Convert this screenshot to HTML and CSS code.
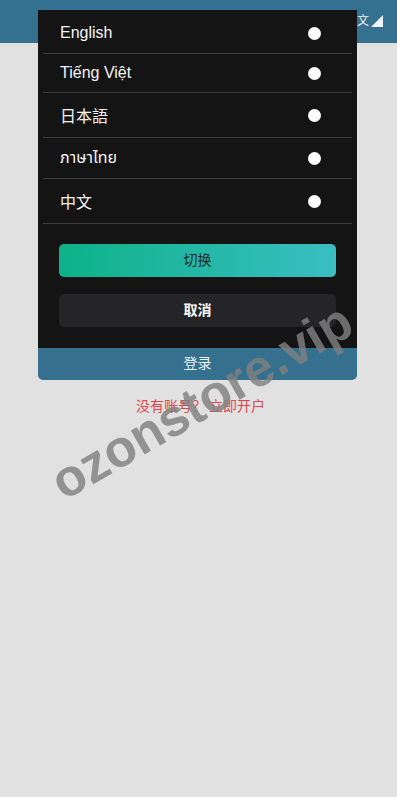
FILE: index.html
```html
<!DOCTYPE html>
<html lang="zh">
<head>
<meta charset="utf-8">
<title>登录</title>
<link rel="stylesheet" href="styles.css">
</head>
<body>
<header class="topbar">
  <div class="lang-switch"><span class="lang-icon">文</span><span class="corner"></span></div>
</header>
<main class="page">
  <div class="form-spacer"></div>
  <button class="login-btn">登录</button>
  <p class="register">没有账号？ 立即开户</p>
</main>

<div class="modal">
  <ul class="lang-list">
    <li class="lang-row r1"><span>English</span><i class="radio"></i></li>
    <li class="lang-row r2"><span>Tiếng Việt</span><i class="radio"></i></li>
    <li class="lang-row r3"><span>日本語</span><i class="radio"></i></li>
    <li class="lang-row r4"><span>ภาษาไทย</span><i class="radio"></i></li>
    <li class="lang-row r5"><span>中文</span><i class="radio"></i></li>
  </ul>
  <div class="actions">
    <button class="btn-switch">切换</button>
    <button class="btn-cancel">取消</button>
  </div>
</div>

<div class="watermark">ozonstore.vip</div>
</body>
</html>
```
FILE: styles.css
```css
* { box-sizing: border-box; }
html, body { margin: 0; padding: 0; }
body {
  background: #e1e1e1;
  font-family: "Liberation Sans", Arial, "Noto Sans CJK SC", sans-serif;
  width: 397px;
  height: 797px;
  overflow: hidden;
  position: relative;
}
.topbar {
  height: 43px;
  background: #34708f;
  display: flex;
  justify-content: flex-end;
  align-items: center;
  padding-right: 14px;
}
.lang-switch {
  display: flex;
  align-items: flex-end;
  gap: 2px;
  margin-top: -4px;
}
.lang-icon {
  color: #e8eef2;
  font-size: 12px;
  font-family: "Noto Sans CJK SC", sans-serif;
  line-height: 14px;
}
.corner {
  width: 0; height: 0;
  border-left: 12px solid transparent;
  border-bottom: 12px solid #eef2f5;
}
.page {
  padding: 0 40px 0 38px;
}
.form-spacer { height: 297px; }
.login-btn {
  display: block;
  width: 319px;
  height: 40px;
  border: 0;
  border-radius: 0 0 5px 5px;
  background: #35708f;
  color: #eef3f6;
  font-family: "Noto Sans CJK SC", sans-serif;
  font-size: 14px;
  padding: 3px 0 0;
}
.register {
  margin: 15px 0 0;
  text-align: center;
  color: #e0444c;
  font-family: "Noto Sans CJK SC", sans-serif;
  font-size: 14px;
  line-height: 20px;
  padding-left: 6px;
}
.modal {
  position: absolute;
  left: 38px;
  top: 10px;
  width: 319px;
  height: 338px;
  background: #141414;
  padding: 0 5px;
}
.lang-list { list-style: none; margin: 0; padding: 0; }
.lang-row {
  display: flex;
  align-items: center;
  justify-content: space-between;
  border-bottom: 1px solid #3c3c3c;
  padding: 0 31px 0 17px;
  color: #f4f4f4;
  font-size: 16px;
}
.lang-row span { font-family: "Liberation Sans", Arial, "Noto Sans CJK JP", sans-serif; }
.r1 { height: 44px; padding-top: 3px; }
.r2 { height: 39px; }
.r3 { height: 45px; }
.r4 { height: 41px; }
.r5 { height: 45px; }
.r3 span, .r5 span { font-family: "Noto Sans CJK SC", sans-serif; }
.r4 span { font-family: "Noto Sans Thai", "DejaVu Sans", sans-serif; font-weight: 400; }
.radio {
  width: 13px; height: 13px;
  border-radius: 50%;
  background: #fff;
  display: block;
}
.actions {
  padding: 20px 16px 0;
  display: flex;
  flex-direction: column;
  gap: 17px;
}
.actions button {
  height: 33px;
  border: 0;
  border-radius: 5px;
  font-family: "Noto Sans CJK SC", sans-serif;
  font-size: 14px;
  padding: 0 0 4px;
}
.btn-switch {
  background: linear-gradient(90deg, #0db289, #39bec2);
  color: #1c2a26;
}
.btn-cancel {
  background: #252528;
  color: #fff;
  font-weight: 700;
}
.watermark {
  position: absolute;
  left: 68px;
  top: 456px;
  font-size: 52px;
  font-weight: 700;
  color: rgba(128,128,128,0.82);
  transform: rotate(-30deg);
  transform-origin: left bottom;
  white-space: nowrap;
  line-height: 1;
  pointer-events: none;
}
```
